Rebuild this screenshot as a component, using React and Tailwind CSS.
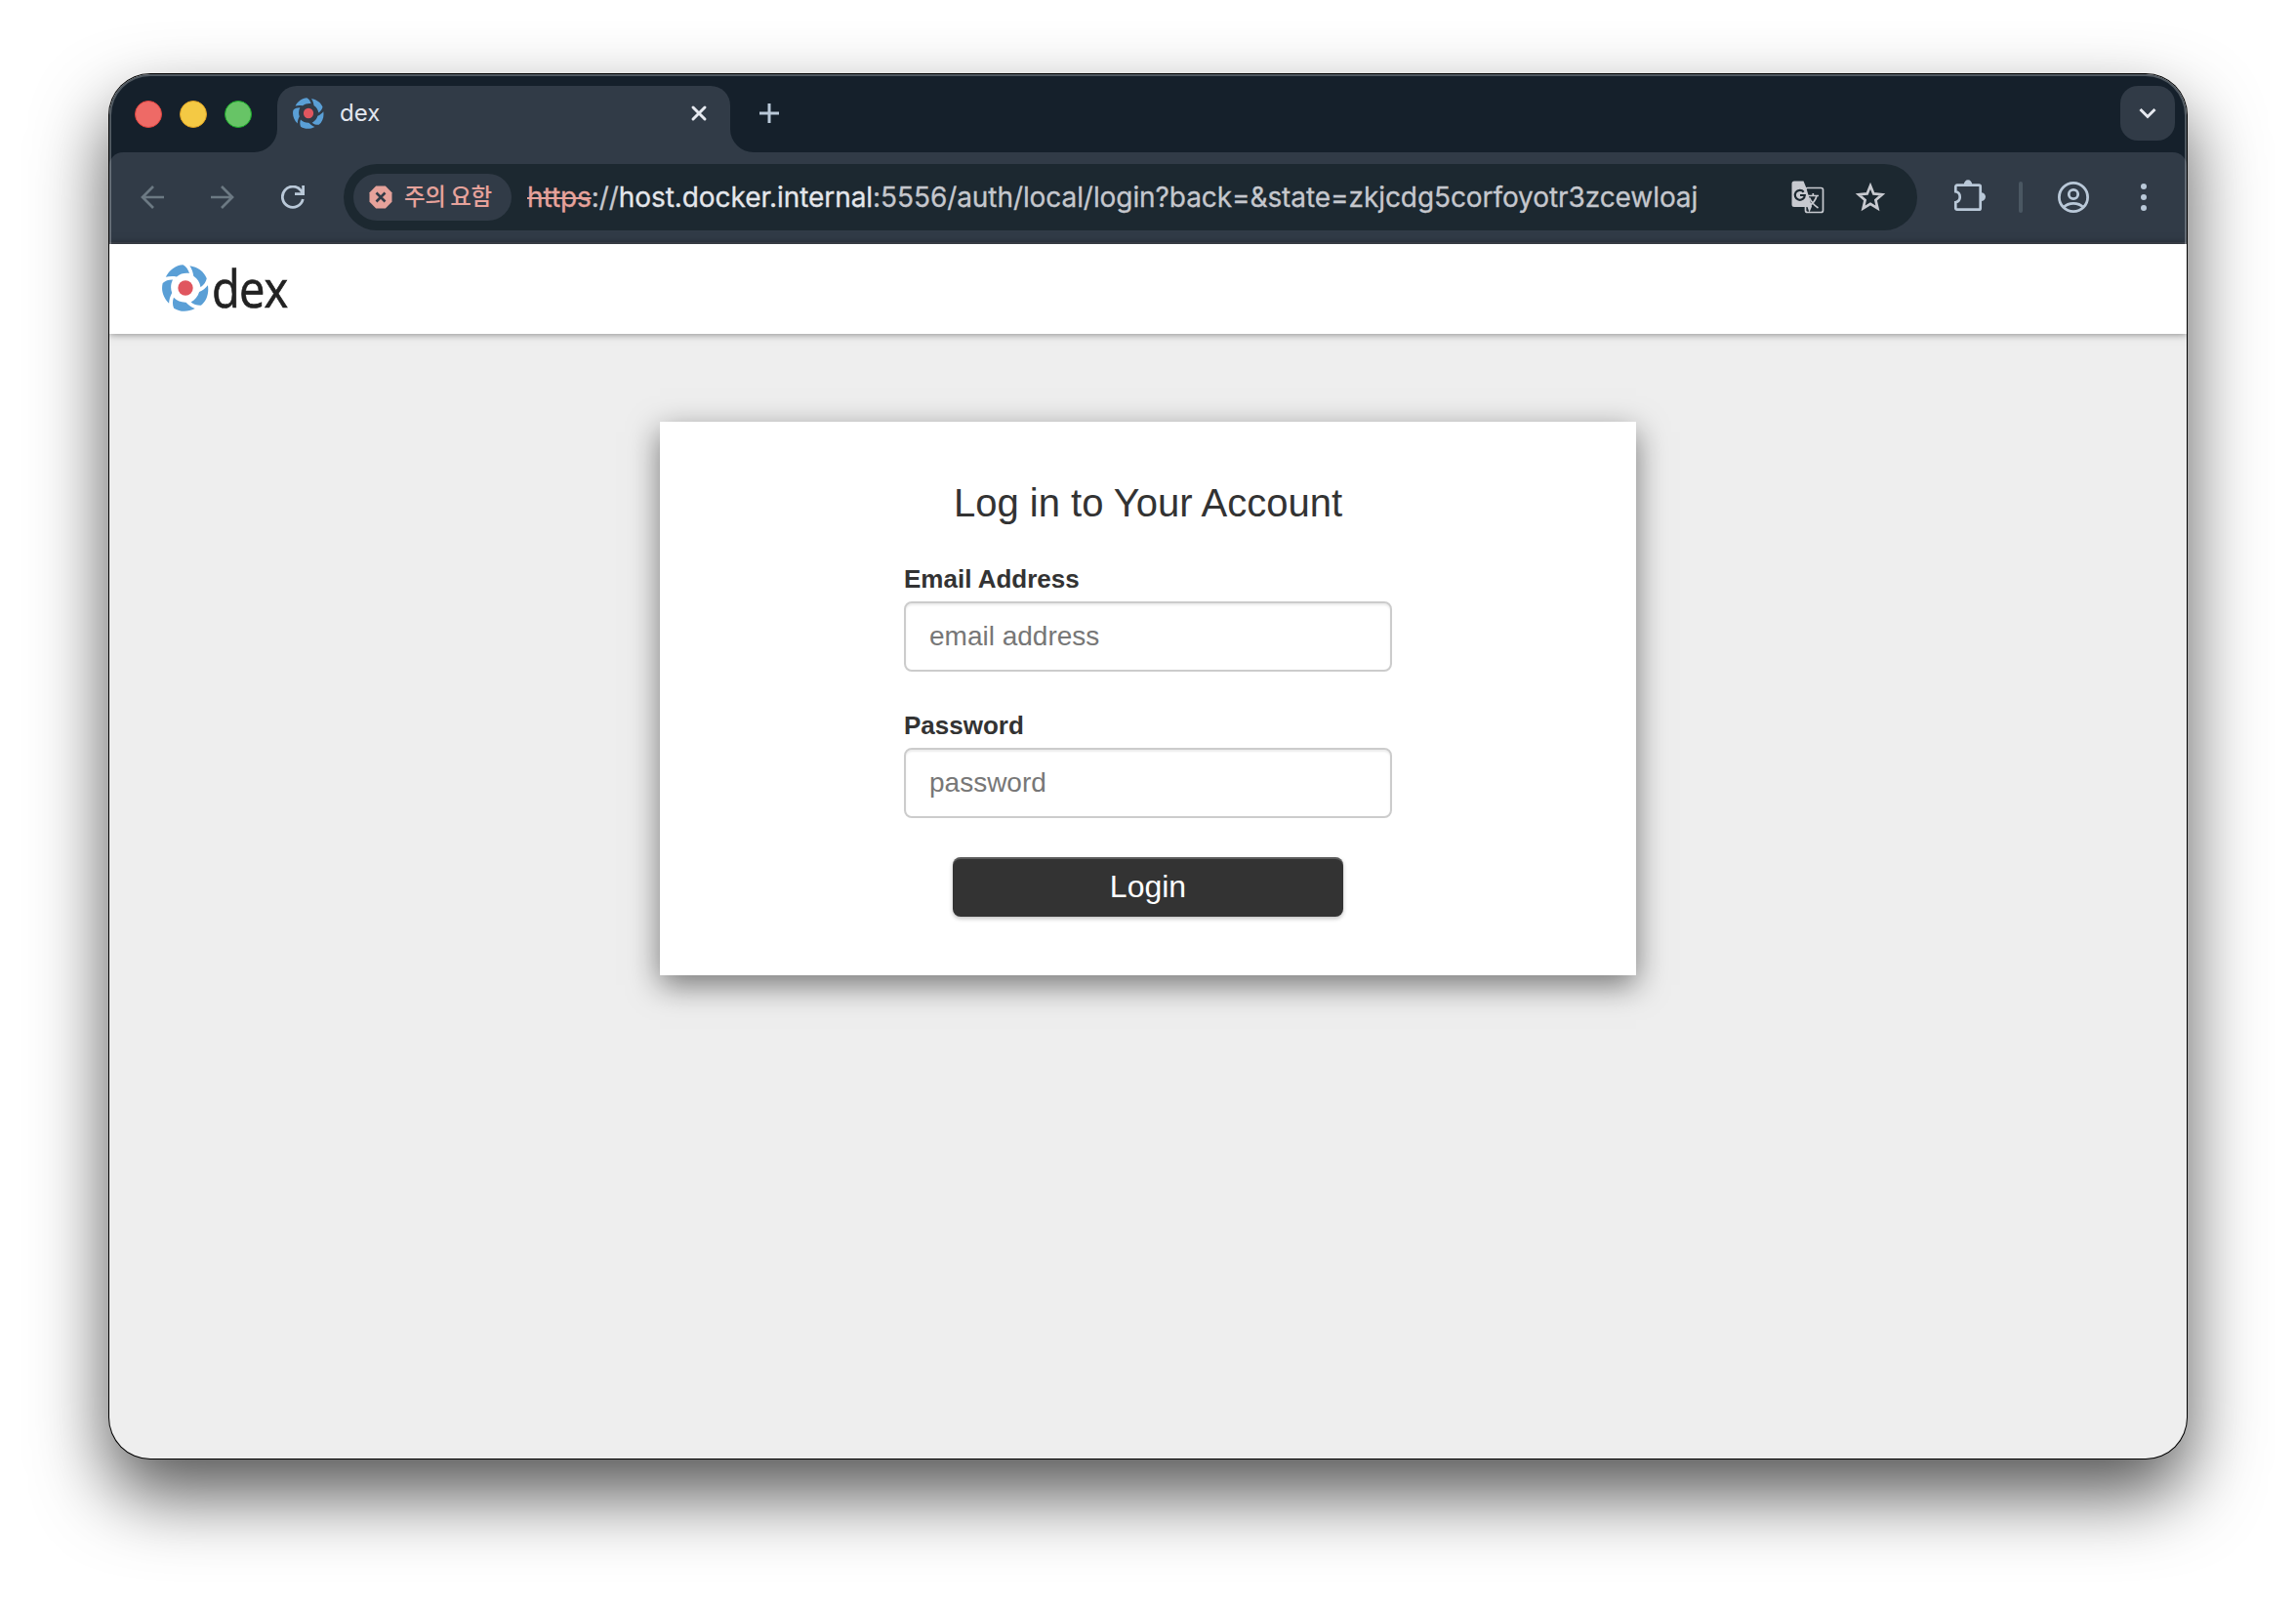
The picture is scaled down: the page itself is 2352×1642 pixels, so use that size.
function DexMark({ className }) {
  return (
    <svg viewBox="0 0 48 48" className={className}>
      <g fill="#5a9fd6">
        {[0, 72, 144, 216, 288].map((a) => (
          <path key={a} transform={`rotate(${a} 24 24)`} d="M3.800 12.800C7.500 5.500 14 .700 21.500 .300C24.700 2.200 26.800 5 28 9C23 8.400 19 9.300 15 12.400C11 11.600 7.500 11.800 3.800 12.800Z" />
        ))}
      </g>
      <circle cx="24" cy="24" r="7.700" fill="#e0565f" />
    </svg>
  );
}

function TabStrip() {
  return (
    <div className="flex h-20 shrink-0 items-start bg-[#15202b]">
      <div className="flex gap-[18px] pt-[27px] pl-[26px]">
        <span className="size-7 rounded-full border border-[#e0443e] bg-[#ee6a66]" />
        <span className="size-7 rounded-full border border-[#dea123] bg-[#f4c944]" />
        <span className="size-7 rounded-full border border-[#1aab29] bg-[#67c466]" />
      </div>
      <svg width="24" height="24" className="mt-14 ml-[2px] shrink-0 fill-[#313b47]"><path d="M24 0v24H0A24 24 0 0 0 24 0Z" /></svg>
      <div className="mt-3 flex h-[68px] w-[464px] items-start rounded-t-[20px] bg-[#313b47] pt-3 pr-[22px] pl-4">
        <DexMark className="size-8" />
        <span className="ml-4 font-['Inter'] text-[24px] leading-[31px] text-[#e2e6ee]">dex</span>
        <svg viewBox="0 0 20 20" className="mt-[6px] ml-auto size-5 fill-none stroke-[#e6e9f0] stroke-[3]" strokeLinecap="round"><path d="M4 4l12 12M16 4L4 16" /></svg>
      </div>
      <svg width="24" height="24" className="mt-14 shrink-0 fill-[#313b47]"><path d="M0 0v24h24A24 24 0 0 1 0 0Z" /></svg>
      <svg viewBox="0 0 20 20" className="mt-[30px] ml-1.5 size-5 fill-none stroke-[#b9c8d8] stroke-[3]"><path d="M10 0v20M0 10h20" /></svg>
      <div className="mt-3 mr-3 ml-auto flex size-14 items-center justify-center rounded-[18px] bg-[#313b47]">
        <svg viewBox="0 0 18 12" className="h-3 w-[18px] fill-none stroke-[#e6e9f0] stroke-[3]"><path d="M1.500 2L9 9.500L16.500 2" /></svg>
      </div>
    </div>
  );
}

function Toolbar() {
  return (
    <div className="h-[94px] shrink-0 bg-[#15202b]">
      <div className="flex h-full items-start rounded-t-[14px] border-b-2 border-[#444a54] bg-[#313b47] pt-3">
        <div className="flex h-[68px] items-center pl-8">
          <svg viewBox="0 0 24 24" className="size-6 fill-none stroke-[#6c7983] stroke-[2.700]"><path d="M24 12H2M13 1L2 12l11 11" /></svg>
          <svg viewBox="0 0 24 24" className="ml-12 size-6 fill-none stroke-[#6c7983] stroke-[2.700]"><path d="M0 12h22M11 1l11 11l-11 11" /></svg>
          <svg viewBox="0 0 24 24" className="ml-12 size-6 fill-none stroke-[#b9c8d8] stroke-[2.800]"><path d="M22.300 14A10.600 10.600 0 1 1 20.500 5.400L22.600 8.600M22.600 0V8.600H14" /></svg>
        </div>
        <div className="ml-10 flex h-[68px] w-[1612px] items-center rounded-full bg-[#1c2830] pr-8 pl-[10px]">
          <div className="flex h-12 w-[162px] items-center rounded-full bg-[#313b47] pl-4">
            <svg viewBox="0 0 24 24" className="size-6"><path fill="#e6a29b" d="M7.200.500h9.600l6.700 6.700v9.600l-6.700 6.700H7.200L.500 16.800V7.200Z" /><path d="M7.500 7.500l9 9M16.500 7.500l-9 9" className="stroke-[#313b47] stroke-[2.600]" /></svg>
            <span className="-mt-[3px] ml-3 whitespace-nowrap font-['Noto_Sans_CJK_KR',sans-serif] text-[23.500px] leading-none font-medium tracking-[-.4px] text-[#e6a29b]">주의 요함</span>
          </div>
          <div className="ml-4 whitespace-nowrap font-['Inter'] text-[28px] leading-[34px] tracking-[-.075px] text-[#c5c7cd] [-webkit-text-stroke:0.3px]">
            <span className="text-[#e6a29b] line-through decoration-2">https</span>://<span className="text-[#e4e6eb]">host.docker.internal</span>:5556/auth/local/login?back=&amp;state=zkjcdg5corfoyotr3zcewloaj
          </div>
          <svg viewBox="0 0 34 34" className="ml-auto size-[34px] shrink-0">
            <rect x="14.500" y="7.500" width="18" height="25" rx="2" fill="none" stroke="#c8cad0" strokeWidth="1.700" />
            <path fill="#c8cad0" d="M3 .500h9.500L15 6.500l6 20l-2.500 6l-2-5.500H3a2.500 2.500 0 0 1-2.500-2.500V3A2.500 2.500 0 0 1 3 .500Z" />
            <path d="M12.700 11.700A5 5 0 1 0 13.800 15H9" fill="none" stroke="#1c2830" strokeWidth="2.200" />
            <path d="M16.500 15.500h11.500M22.300 13v2.500M26 15.500C25 20 21.500 24 17.500 26.500M18.500 17.500C20.500 22 23.500 25.500 27.500 28" fill="none" stroke="#c8cad0" strokeWidth="1.700" />
          </svg>
          <svg viewBox="0 0 32 32" className="ml-[31px] size-8 shrink-0 fill-none stroke-[#c8cad0] stroke-[2.700]"><path d="M16 4.300l3.300 8.100 8.700.800-6.600 5.700 2 8.600-7.400-4.600-7.400 4.600 2-8.600L4 13.200l8.700-.800Z" /></svg>
        </div>
        <div className="flex h-[68px] items-center">
          <svg viewBox="0 -1 34 34" className="-mt-0.5 ml-[37px] size-[34px] stroke-[#b9c8d8]">
            <path d="M2.300 6.200a1.500 1.500 0 0 1 1.500-1.500H26.200a1.500 1.500 0 0 1 1.500 1.500V28.200a1.500 1.500 0 0 1-1.500 1.500H3.800a1.500 1.500 0 0 1-1.500-1.500V22.200C8.200 21 8.200 12.500 2.300 11.300Z" fill="none" strokeWidth="2.700" />
            <path d="M10.800 4a4.200 4.700 0 0 1 8.400 0ZM28.500 12.300a4.500 4.300 0 0 1 0 8.600Z" fill="#b9c8d8" stroke="none" />
          </svg>
          <span className="ml-[33px] h-8 w-1 rounded-full bg-[#4a5762]" />
          <svg viewBox="0 0 32 32" className="ml-9 size-8 fill-none stroke-[#b9c8d8] stroke-[2.800]"><circle cx="16" cy="16" r="14.600" /><circle cx="16" cy="13" r="4.700" /><path d="M6 26.300C8.500 23.600 12 22.300 16 22.300s7.500 1.300 10 4" /></svg>
          <svg viewBox="0 0 6 28" className="ml-[53px] h-7 w-1.5 fill-[#b9c8d8]"><circle cx="3" cy="3" r="3" /><circle cx="3" cy="14" r="3" /><circle cx="3" cy="25" r="3" /></svg>
        </div>
      </div>
    </div>
  );
}

function Field({ label, type, placeholder }) {
  return (
    <label className="mb-[38px] flex w-[500px] flex-col">
      <span className="mb-1.5 text-[26px] leading-[34px] font-bold">{label}</span>
      <input type={type} placeholder={placeholder} className="h-[72px] rounded-lg border-2 border-[#ccc] bg-white px-6 text-[28px] shadow-[inset_0_2px_2px_rgba(0,0,0,0.075)] placeholder:text-[#777]" />
    </label>
  );
}

export default function App() {
  return (
    <div className="h-[1642px] w-[2352px] overflow-hidden bg-white px-[112px] pt-[76px]">
      <div className="relative flex h-[1418px] flex-col rounded-[42px] bg-[#eee] shadow-[0_0_0_1px_#000,0_36px_76px_rgba(0,0,0,0.68)]">
        <div className="flex flex-1 flex-col overflow-hidden rounded-[42px]">
          <TabStrip />
          <Toolbar />
          <header className="flex h-[92px] shrink-0 items-center bg-white pl-[54px] shadow-[0_0_8px_rgba(0,0,0,0.5)]">
            <DexMark className="-mt-0.5 size-12" />
            <span className="-mt-[3px] ml-[3px] origin-left scale-x-[0.89] font-['Open_Sans'] text-[53px] leading-[60px] tracking-[-1px] text-[#222] [-webkit-text-stroke:0.7px_#222]">dex</span>
          </header>
          <main className="flex justify-center pt-[90px] font-['Liberation_Sans',sans-serif] text-[#333]">
            <form className="flex h-[567px] w-[1000px] flex-col items-center bg-white pt-[60px] shadow-[0_10px_30px_rgba(0,0,0,0.5)]">
              <h1 className="mb-[38px] text-[40px] leading-[46px]">Log in to Your Account</h1>
              <Field label="Email Address" type="email" placeholder="email address" />
              <Field label="Password" type="password" placeholder="password" />
              <button type="button" className="mt-0.5 h-[61px] w-[400px] rounded-lg bg-[#333] pb-0.5 text-[32px] leading-[58px] text-white shadow-[inset_0_2px_0_rgba(255,255,255,0.2),0_2px_4px_rgba(0,0,0,0.25)]">Login</button>
            </form>
          </main>
        </div>
        <div className="pointer-events-none absolute inset-x-0 top-0 h-[174px] rounded-t-[42px] border-2 border-b-0 border-white/25" />
      </div>
    </div>
  );
}
